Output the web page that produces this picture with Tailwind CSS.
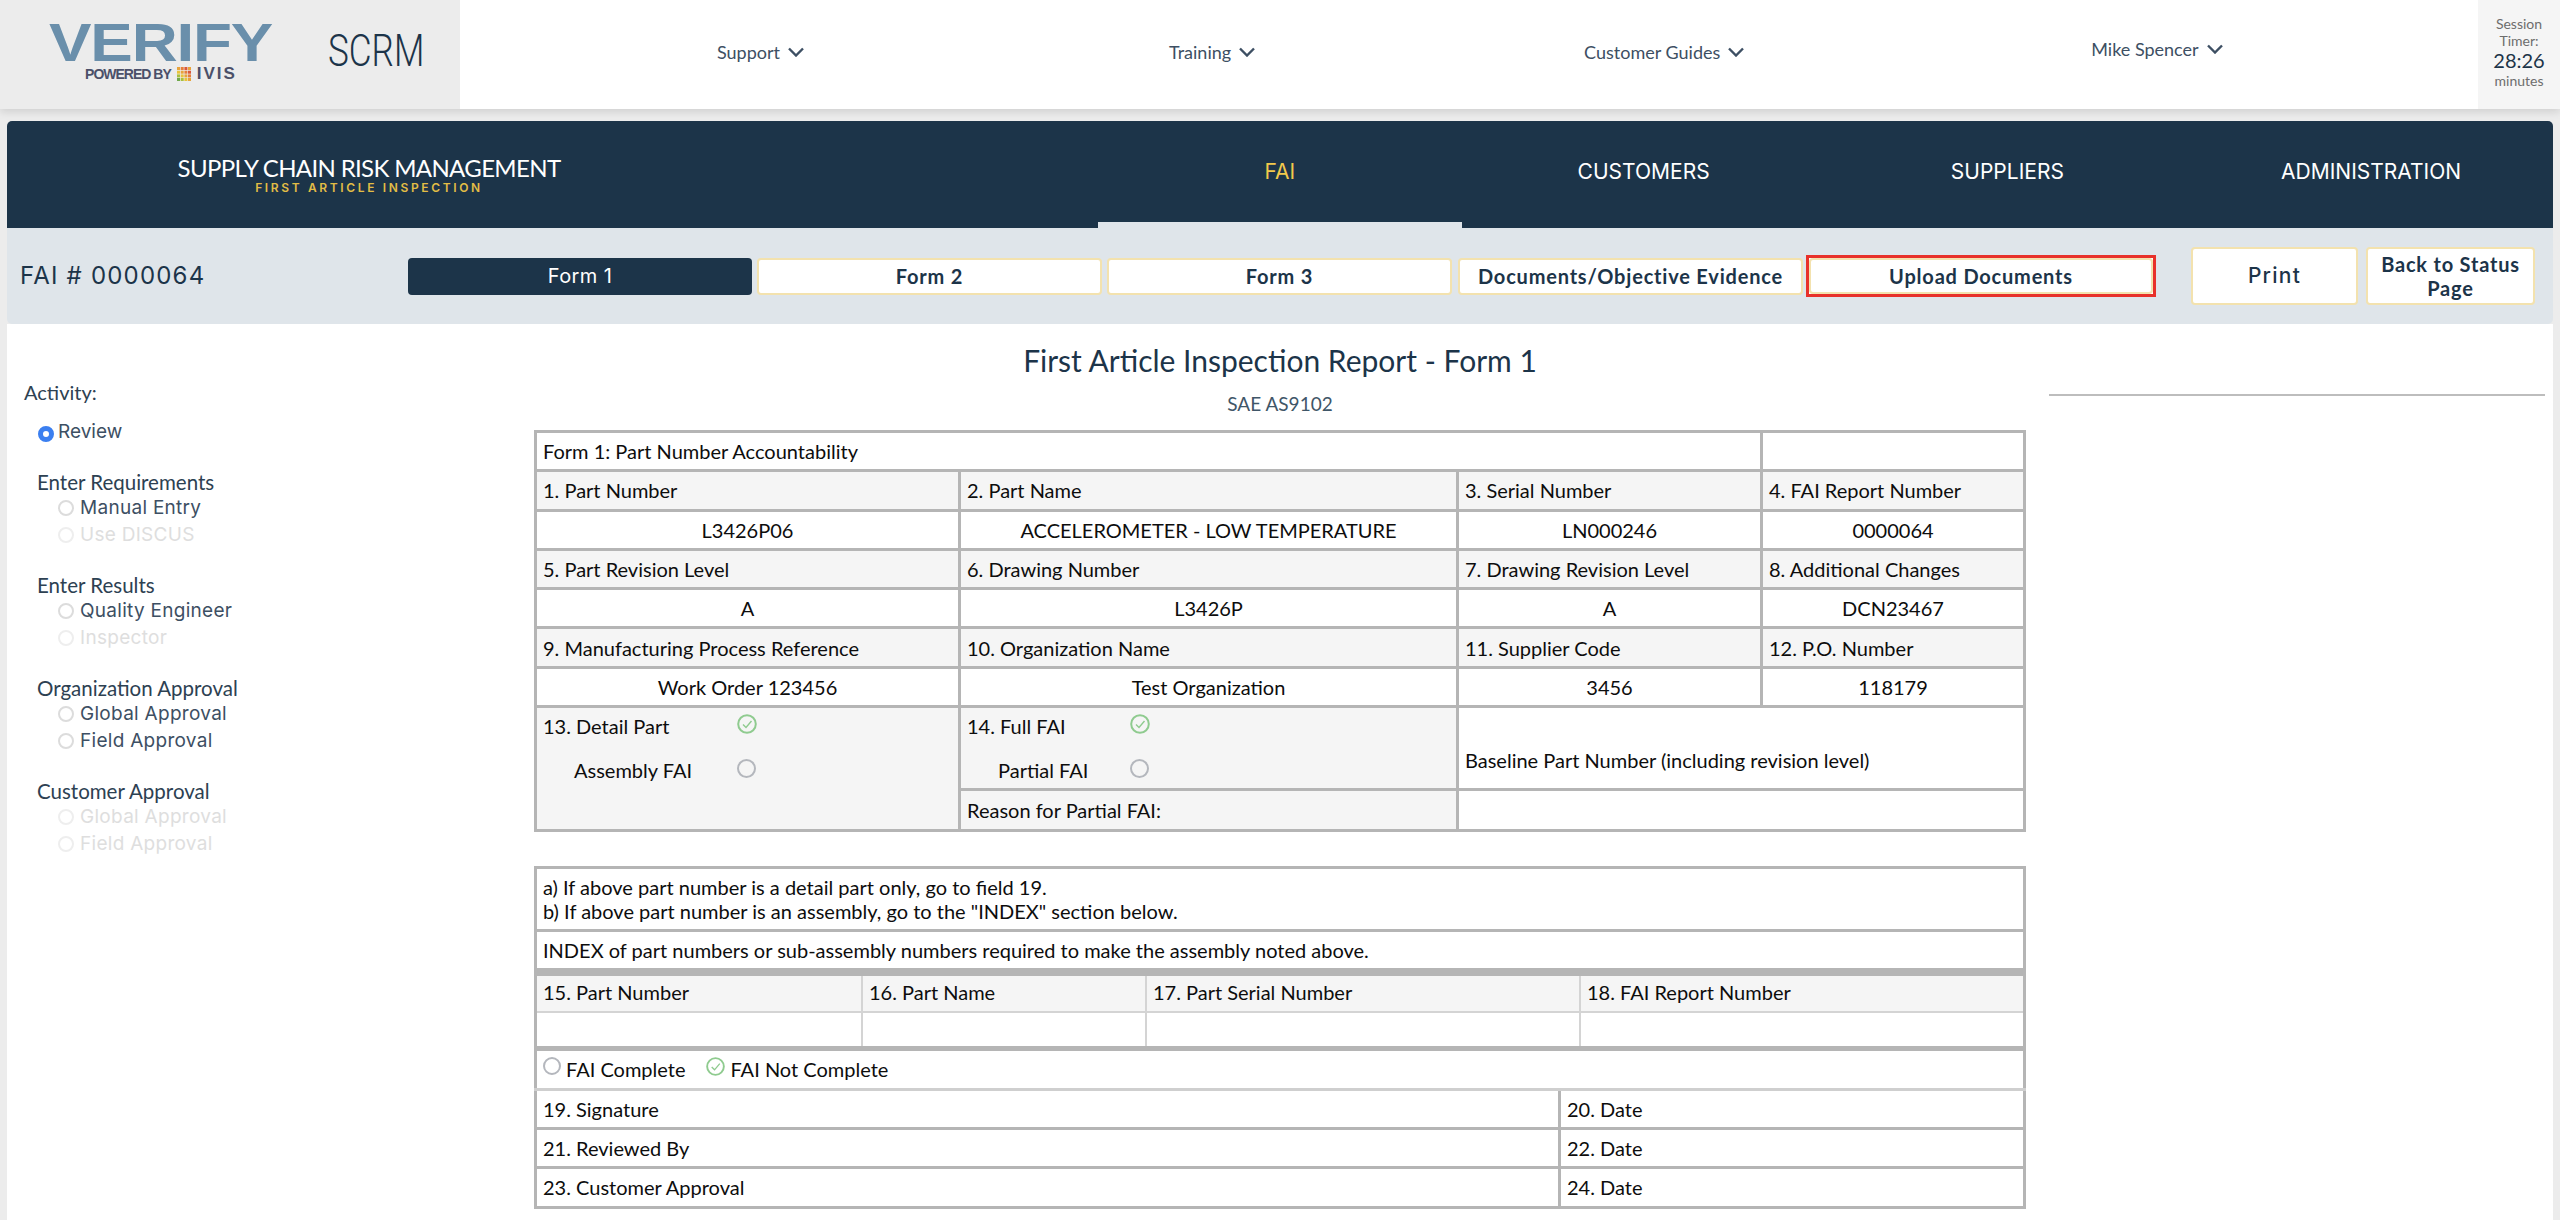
<!doctype html>
<html lang="en">
<head>
<meta charset="utf-8">
<title>First Article Inspection Report - Form 1</title>
<script src="https://cdn.jsdelivr.net/npm/@tailwindcss/browser@4"></script>
</head>
<body class="w-[2560px] h-[1220px] overflow-hidden bg-[#ececec] font-['Lato','Liberation_Sans',sans-serif]">
<header class="h-[109px] flex bg-white relative shadow-[0_3px_8px_rgba(0,0,0,0.12)]">
  <div class="w-[460px] shrink-0 bg-[#ececec] flex items-start">
    <div class="ml-[49px] mt-[21px] w-[224px] flex flex-col items-center">
      <span class="font-['Liberation_Sans',sans-serif] font-bold text-[#6a8fab] text-[54px] leading-[42px] h-[42px] tracking-[-1px] scale-x-[1.18]">VERIFY</span>
      <span class="mt-[3px] flex items-center font-['Liberation_Sans',sans-serif] text-[#4b5069] h-[16px]">
        <span class="text-[14px] font-bold tracking-[-1px]">POWERED BY</span>
        <svg class="ml-[6px]" width="14" height="14" viewBox="0 0 14 14"><rect x="0" y="0" width="3" height="3" fill="#e8a33a"/><rect x="3.7" y="0" width="3" height="3" fill="#e67e3a"/><rect x="7.4" y="0" width="3" height="3" fill="#d9573a"/><rect x="11" y="0" width="3" height="3" fill="#e8a33a"/><rect x="0" y="3.7" width="3" height="3" fill="#e9c33a"/><rect x="3.7" y="3.7" width="3" height="3" fill="#e8a33a"/><rect x="7.4" y="3.7" width="3" height="3" fill="#e67e3a"/><rect x="11" y="3.7" width="3" height="3" fill="#d9573a"/><rect x="0" y="7.4" width="3" height="3" fill="#a9bf3e"/><rect x="3.7" y="7.4" width="3" height="3" fill="#e9c33a"/><rect x="7.4" y="7.4" width="3" height="3" fill="#e8a33a"/><rect x="11" y="7.4" width="3" height="3" fill="#e67e3a"/><rect x="0" y="11" width="3" height="3" fill="#6fa84a"/><rect x="3.7" y="11" width="3" height="3" fill="#a9bf3e"/><rect x="7.4" y="11" width="3" height="3" fill="#e9c33a"/><rect x="11" y="11" width="3" height="3" fill="#e8a33a"/></svg>
        <span class="ml-[6px] text-[17px] font-bold tracking-[2px]">IVIS</span>
      </span>
    </div>
    <span class="ml-[55px] mt-[25px] font-['Roboto',sans-serif] font-light text-[#1c3449] text-[45px] leading-[52px] scale-x-[.78] origin-left">SCRM</span>
  </div>
  <nav class="flex-1 flex text-[#3d4f63] text-[18px]">
    <button class="ml-[257px] h-[104px] flex items-center gap-[8px]">Support<svg width="16" height="10" viewBox="0 0 16 10" fill="none" stroke="#3d4f63" stroke-width="2.4"><path d="M1 1.5 8 8.5 15 1.5"/></svg></button>
    <button class="ml-[365px] h-[104px] flex items-center gap-[8px]">Training<svg width="16" height="10" viewBox="0 0 16 10" fill="none" stroke="#3d4f63" stroke-width="2.4"><path d="M1 1.5 8 8.5 15 1.5"/></svg></button>
    <button class="ml-[329px] h-[104px] flex items-center gap-[8px]">Customer Guides<svg width="16" height="10" viewBox="0 0 16 10" fill="none" stroke="#3d4f63" stroke-width="2.4"><path d="M1 1.5 8 8.5 15 1.5"/></svg></button>
    <button class="ml-[347px] h-[98px] flex items-center gap-[8px]">Mike Spencer<svg width="16" height="10" viewBox="0 0 16 10" fill="none" stroke="#3d4f63" stroke-width="2.4"><path d="M1 1.5 8 8.5 15 1.5"/></svg></button>
  </nav>
  <div class="w-[82px] shrink-0 bg-[#f5f5f5] flex flex-col items-center pt-[15px] text-[14px] leading-[17px] text-[#6d6d6d]">
    <span>Session</span>
    <span>Timer:</span>
    <span class="text-[20px] leading-[24px] text-[#1c3449] mt-[-1px]">28:26</span>
    <span>minutes</span>
  </div>
</header>
<div class="mx-[7px] mt-[12px] h-[107px] flex bg-[#1c3449] rounded-t-[5px]">
  <div class="w-[724px] flex flex-col items-center pt-[33px]">
    <span class="text-white text-[24px] leading-[28px] tracking-[-.65px]">SUPPLY CHAIN RISK MANAGEMENT</span>
    <span class="text-[#e3bd45] text-[12px] leading-[14px] tracking-[.22em] font-semibold font-['Inter',sans-serif] mt-[-1px]">FIRST ARTICLE INSPECTION</span>
  </div>
  <div class="w-[367px]"></div>
  <div class="flex-1 grid grid-cols-4 font-['Inter',sans-serif] text-[21px] text-white">
    <a class="flex items-center justify-center text-[#f1c94c] border-b-[6px] border-[#dfe5ea]">FAI</a>
    <a class="flex items-center justify-center pb-[6px]">CUSTOMERS</a>
    <a class="flex items-center justify-center pb-[6px]">SUPPLIERS</a>
    <a class="flex items-center justify-center pb-[6px]">ADMINISTRATION</a>
  </div>
</div>
<div class="mx-[7px] h-[96px] flex items-center bg-[#dfe5ea] rounded-b-[5px] text-[#1c3449]">
  <div class="w-[401px] pl-[13px] font-['Inter',sans-serif] text-[24px] text-[#1c3449] tracking-[.05em]">FAI # 0000064</div>
  <button class="w-[344px] h-[37px] rounded-[4px] bg-[#1c3449] text-white font-['Inter',sans-serif] text-[20px] tracking-[.02em] flex items-center justify-center">Form 1</button>
  <button class="ml-[5px] w-[345px] h-[37px] rounded-[4px] bg-white border-2 border-[#f3e2ae] font-bold text-[20px] tracking-[.04em] flex items-center justify-center">Form 2</button>
  <button class="ml-[5px] w-[345px] h-[37px] rounded-[4px] bg-white border-2 border-[#f3e2ae] font-bold text-[20px] tracking-[.04em] flex items-center justify-center">Form 3</button>
  <button class="ml-[6px] w-[345px] h-[37px] rounded-[4px] bg-white border-2 border-[#f3e2ae] font-bold text-[20px] tracking-[.04em] flex items-center justify-center">Documents/Objective Evidence</button>
  <div class="ml-[3px] w-[350px] h-[42px] border-[3px] border-[#e8312a] bg-white">
    <button class="w-full h-full rounded-[4px] border-2 border-[#f3e2ae] font-bold text-[20px] tracking-[.04em] flex items-center justify-center">Upload Documents</button>
  </div>
  <button class="ml-[35px] w-[167px] h-[58px] rounded-[4px] bg-white border-2 border-[#f3e2ae] font-['Inter',sans-serif] font-medium text-[21px] tracking-[.06em] flex items-center justify-center">Print</button>
  <button class="ml-[8px] w-[169px] h-[58px] rounded-[4px] bg-white border-2 border-[#f3e2ae] font-bold text-[20px] leading-[24px] tracking-[.04em] flex items-center justify-center text-center">Back to Status<br>Page</button>
</div>
<main class="mx-[7px] h-[896px] flex bg-white">
  <aside class="w-[527px] shrink-0 pl-[17px] pt-[56px] text-[#2d4152]">
    <div class="text-[20px] leading-[24px]">Activity:</div>
    <label class="mt-[15px] ml-[14px] h-[26px] flex items-center gap-[4px] font-['Inter',sans-serif] text-[19px] text-[#3d4f63]"><span class="w-4 h-4 mt-[3px] rounded-full bg-white border-[5px] border-[#3b7ff0]"></span>Review</label>
    <section class="mt-[24px] ml-[13px]">
      <h3 class="text-[20.5px] leading-[26px] font-normal">Enter Requirements</h3>
      <label class="pl-[21px] h-[26.5px] flex items-center gap-[6px] font-['Inter',sans-serif] text-[19px] tracking-[.015em] text-[#3d4f63]"><span class="w-4 h-4 rounded-full border-2 border-[#dcdcdc]"></span>Manual Entry</label>
      <label class="pl-[21px] h-[26.5px] flex items-center gap-[6px] font-['Inter',sans-serif] text-[19px] tracking-[.015em] text-[#dedede]"><span class="w-4 h-4 rounded-full border-2 border-[#eeeeee]"></span>Use DISCUS</label>
    </section>
    <section class="mt-[24px] ml-[13px]">
      <h3 class="text-[20.5px] leading-[26px] font-normal">Enter Results</h3>
      <label class="pl-[21px] h-[26.5px] flex items-center gap-[6px] font-['Inter',sans-serif] text-[19px] tracking-[.015em] text-[#3d4f63]"><span class="w-4 h-4 rounded-full border-2 border-[#dcdcdc]"></span>Quality Engineer</label>
      <label class="pl-[21px] h-[26.5px] flex items-center gap-[6px] font-['Inter',sans-serif] text-[19px] tracking-[.015em] text-[#dedede]"><span class="w-4 h-4 rounded-full border-2 border-[#eeeeee]"></span>Inspector</label>
    </section>
    <section class="mt-[24px] ml-[13px]">
      <h3 class="text-[20.5px] leading-[26px] font-normal">Organization Approval</h3>
      <label class="pl-[21px] h-[26.5px] flex items-center gap-[6px] font-['Inter',sans-serif] text-[19px] tracking-[.015em] text-[#3d4f63]"><span class="w-4 h-4 rounded-full border-2 border-[#dcdcdc]"></span>Global Approval</label>
      <label class="pl-[21px] h-[26.5px] flex items-center gap-[6px] font-['Inter',sans-serif] text-[19px] tracking-[.015em] text-[#3d4f63]"><span class="w-4 h-4 rounded-full border-2 border-[#dcdcdc]"></span>Field Approval</label>
    </section>
    <section class="mt-[24px] ml-[13px]">
      <h3 class="text-[20.5px] leading-[26px] font-normal">Customer Approval</h3>
      <label class="pl-[21px] h-[26.5px] flex items-center gap-[6px] font-['Inter',sans-serif] text-[19px] tracking-[.015em] text-[#dedede]"><span class="w-4 h-4 rounded-full border-2 border-[#eeeeee]"></span>Global Approval</label>
      <label class="pl-[21px] h-[26.5px] flex items-center gap-[6px] font-['Inter',sans-serif] text-[19px] tracking-[.015em] text-[#dedede]"><span class="w-4 h-4 rounded-full border-2 border-[#eeeeee]"></span>Field Approval</label>
    </section>
  </aside>
  <div class="w-[1492px] shrink-0 pt-[16px]">
    <h1 class="text-center text-[30px] leading-[40px] text-[#1c3449]">First Article Inspection Report - Form 1</h1>
    <p class="mt-[12px] text-center text-[19px] leading-[24px] text-[#3f5668]">SAE AS9102</p>
    <table class="mt-[14px] w-[1489px] table-fixed border-collapse text-[20px] leading-[24px] text-[#0d0d0d]">
      <colgroup><col class="w-[424px]"><col class="w-[498px]"><col class="w-[304px]"><col class="w-[263px]"></colgroup>
      <tr class="h-[39.3px]"><td colspan="3" class="border-[3px] border-[#b5b5b5] px-[6px]">Form 1: Part Number Accountability</td><td class="border-[3px] border-l-2 border-[#b5b5b5]"></td></tr>
      <tr class="h-[39.3px] bg-[#f5f5f5]"><td class="border-[3px] border-[#b5b5b5] px-[6px]">1. Part Number</td><td class="border-[3px] border-[#b5b5b5] px-[6px]">2. Part Name</td><td class="border-[3px] border-[#b5b5b5] px-[6px]">3. Serial Number</td><td class="border-[3px] border-l-2 border-[#b5b5b5] px-[6px]">4. FAI Report Number</td></tr>
      <tr class="h-[39.3px] text-center"><td class="border-[3px] border-[#b5b5b5]">L3426P06</td><td class="border-[3px] border-[#b5b5b5]">ACCELEROMETER - LOW TEMPERATURE</td><td class="border-[3px] border-[#b5b5b5]">LN000246</td><td class="border-[3px] border-l-2 border-[#b5b5b5]">0000064</td></tr>
      <tr class="h-[39.3px] bg-[#f5f5f5]"><td class="border-[3px] border-[#b5b5b5] px-[6px]">5. Part Revision Level</td><td class="border-[3px] border-[#b5b5b5] px-[6px]">6. Drawing Number</td><td class="border-[3px] border-[#b5b5b5] px-[6px]">7. Drawing Revision Level</td><td class="border-[3px] border-l-2 border-[#b5b5b5] px-[6px]">8. Additional Changes</td></tr>
      <tr class="h-[39.3px] text-center"><td class="border-[3px] border-[#b5b5b5]">A</td><td class="border-[3px] border-[#b5b5b5]">L3426P</td><td class="border-[3px] border-[#b5b5b5]">A</td><td class="border-[3px] border-l-2 border-[#b5b5b5]">DCN23467</td></tr>
      <tr class="h-[39.3px] bg-[#f5f5f5]"><td class="border-[3px] border-[#b5b5b5] px-[6px]">9. Manufacturing Process Reference</td><td class="border-[3px] border-[#b5b5b5] px-[6px]">10. Organization Name</td><td class="border-[3px] border-[#b5b5b5] px-[6px]">11. Supplier Code</td><td class="border-[3px] border-l-2 border-[#b5b5b5] px-[6px]">12. P.O. Number</td></tr>
      <tr class="h-[39.3px] text-center"><td class="border-[3px] border-[#b5b5b5]">Work Order 123456</td><td class="border-[3px] border-[#b5b5b5]">Test Organization</td><td class="border-[3px] border-[#b5b5b5]">3456</td><td class="border-[3px] border-l-2 border-[#b5b5b5]">118179</td></tr>
      <tr class="h-[83px]">
        <td rowspan="2" class="bg-[#f5f5f5] border-[3px] border-[#b5b5b5] px-[6px] align-top pt-[6px]">
          <div class="flex items-center h-[24px]"><span class="w-[194px]">13. Detail Part</span><svg class="mt-[-4px]" width="20" height="20" viewBox="0 0 20 20" fill="none"><circle cx="10" cy="10" r="8.8" stroke="#8fcb8f" stroke-width="2"/><path d="M6 10.5 9 13.5 14.5 7" stroke="#8fcb8f" stroke-width="1.4"/></svg></div>
          <div class="flex items-center h-[24px] mt-[20px] pl-[31px]"><span class="w-[163px]">Assembly FAI</span><span class="mt-[-4px] w-[19px] h-[19px] rounded-full border-2 border-[#b4b7bd]"></span></div>
        </td>
        <td class="bg-[#f5f5f5] border-[3px] border-[#b5b5b5] px-[6px] align-top pt-[6px]">
          <div class="flex items-center h-[24px]"><span class="w-[163px]">14. Full FAI</span><svg class="mt-[-4px]" width="20" height="20" viewBox="0 0 20 20" fill="none"><circle cx="10" cy="10" r="8.8" stroke="#8fcb8f" stroke-width="2"/><path d="M6 10.5 9 13.5 14.5 7" stroke="#8fcb8f" stroke-width="1.4"/></svg></div>
          <div class="flex items-center h-[24px] mt-[20px] pl-[31px]"><span class="w-[132px]">Partial FAI</span><span class="mt-[-4px] w-[19px] h-[19px] rounded-full border-2 border-[#b4b7bd]"></span></div>
        </td>
        <td colspan="2" class="border-[3px] border-[#b5b5b5] px-[6px] pt-[24px]">Baseline Part Number (including revision level)</td>
      </tr>
      <tr class="h-[41px]"><td class="bg-[#f5f5f5] border-[3px] border-[#b5b5b5] px-[6px]">Reason for Partial FAI:</td><td colspan="2" class="border-[3px] border-[#b5b5b5]"></td></tr>
    </table>
    <table class="mt-[34px] w-[1489px] table-fixed border-collapse text-[20px] leading-[24px] text-[#0d0d0d]">
      <colgroup><col class="w-[1024px]"><col class="w-[465px]"></colgroup>
      <tr class="h-[63px]"><td colspan="2" class="border-[3px] border-[#b5b5b5] px-[6px]">a) If above part number is a detail part only, go to field 19.<br>b) If above part number is an assembly, go to the "INDEX" section below.</td></tr>
      <tr class="h-[39px]"><td colspan="2" class="border-[3px] border-[#b5b5b5] px-[6px]">INDEX of part numbers or sub-assembly numbers required to make the assembly noted above.</td></tr>
      <tr><td colspan="2" class="p-0 border-x-[3px] border-[#b5b5b5]">
        <table class="w-full table-fixed border-collapse">
          <colgroup><col class="w-[325px]"><col class="w-[284px]"><col class="w-[434px]"><col></colgroup>
          <tr class="h-[38px] bg-[#f5f5f5]"><td class="border-t-[5px] border-b-2 border-r-2 border-[#b5b5b5] border-r-[#d4d4d4] border-b-[#d4d4d4] px-[6px] pb-[3px]">15. Part Number</td><td class="border-t-[5px] border-b-2 border-r-2 border-[#b5b5b5] border-r-[#d4d4d4] border-b-[#d4d4d4] px-[6px] pb-[3px]">16. Part Name</td><td class="border-t-[5px] border-b-2 border-r-2 border-[#b5b5b5] border-r-[#d4d4d4] border-b-[#d4d4d4] px-[6px] pb-[3px]">17. Part Serial Number</td><td class="border-t-[5px] border-b-2 border-[#b5b5b5] border-b-[#d4d4d4] px-[6px] pb-[3px]">18. FAI Report Number</td></tr>
          <tr class="h-[37px]"><td class="border-b-[5px] border-r-2 border-[#b5b5b5] border-r-[#d4d4d4]"></td><td class="border-b-[5px] border-r-2 border-[#b5b5b5] border-r-[#d4d4d4]"></td><td class="border-b-[5px] border-r-2 border-[#b5b5b5] border-r-[#d4d4d4]"></td><td class="border-b-[5px] border-[#b5b5b5]"></td></tr>
        </table>
      </td></tr>
      <tr class="h-[38px]"><td colspan="2" class="border-[3px] border-t-0 border-[#b5b5b5] border-b-[#cfcfcf] px-[6px]">
        <div class="flex items-center h-[24px]">
          <span class="mt-[-6px] w-[18px] h-[18px] rounded-full border-2 border-[#b4b7bd]"></span><span class="ml-[5px]">FAI Complete</span>
          <svg class="ml-[21px] mt-[-6px]" width="19" height="19" viewBox="0 0 20 20" fill="none"><circle cx="10" cy="10" r="8.8" stroke="#8fcb8f" stroke-width="2"/><path d="M6 10.5 9 13.5 14.5 7" stroke="#8fcb8f" stroke-width="1.4"/></svg><span class="ml-[5px]">FAI Not Complete</span>
        </div>
      </td></tr>
      <tr class="h-[39px]"><td class="border-[3px] border-[#b5b5b5] px-[6px]">19. Signature</td><td class="border-[3px] border-[#b5b5b5] px-[6px]">20. Date</td></tr>
      <tr class="h-[39px]"><td class="border-[3px] border-[#b5b5b5] px-[6px]">21. Reviewed By</td><td class="border-[3px] border-[#b5b5b5] px-[6px]">22. Date</td></tr>
      <tr class="h-[40px]"><td class="border-[3px] border-[#b5b5b5] px-[6px]">23. Customer Approval</td><td class="border-[3px] border-[#b5b5b5] px-[6px]">24. Date</td></tr>
    </table>
  </div>
  <div class="ml-[23px] flex-1 pr-[8px]">
    <div class="mt-[70px] h-[2px] bg-[#bdbdbd]"></div>
  </div>
</main>
</body>
</html>
